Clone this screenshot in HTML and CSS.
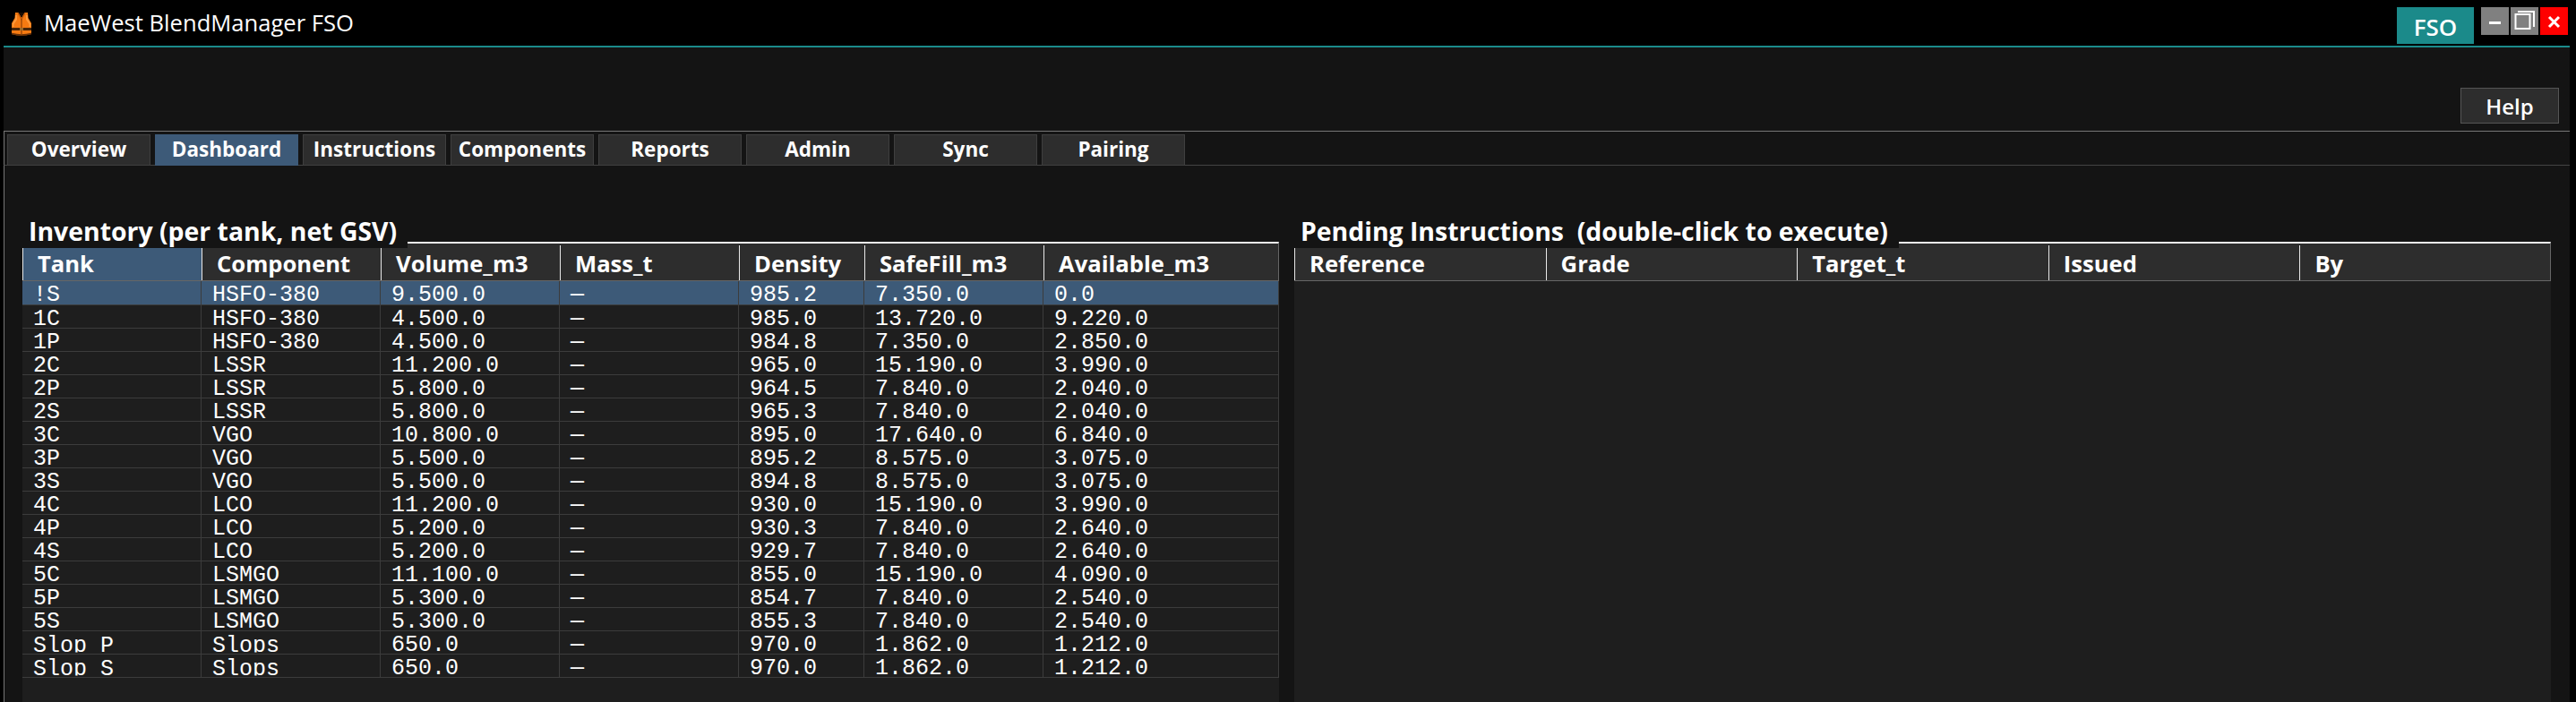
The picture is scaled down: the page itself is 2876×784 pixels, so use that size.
FILE: index.html
```html
<!DOCTYPE html>
<html lang="en">
<head>
    <meta charset="UTF-8">
    <title>MaeWest BlendManager FSO</title>
    <link rel="stylesheet" href="styles.css">
</head>
<body>
    <div class="window">
        <header class="titlebar">
            <svg class="app-icon" width="24" height="27" viewBox="0 0 24 27">
                <path d="M5 0 L8.5 0 L12 6 L15.5 0 L19 0 L19.5 6 L23 12 L23 24 Q12 27 1 24 L1 12 L4.5 6 Z" fill="#f57a12"/>
                <path d="M8.5 0 L15.5 0 L12 5.5 Z" fill="#1a0d04"/>
                <path d="M8 0.5 L12 7.5 L16 0.5" fill="none" stroke="#c25a0a" stroke-width="1.5"/>
                <path d="M5 3 L7 3 L7 8 L3.5 13 L3.5 16 L2 16 L2 12 L5 7 Z M19 3 L17 3 L17 8 L20.5 13 L20.5 16 L22 16 L22 12 L19 7 Z" fill="#ff9a3c"/>
                <path d="M11.4 7 H12.6 V24 H11.4 Z" fill="#8a3e08"/>
                <path d="M1 17 H23 V20 H1 Z" fill="#4a2608"/>
                <path d="M10 17 H14 V20 H10 Z" fill="#9a6a2a"/>
                <path d="M1 23.5 Q12 26.5 23 23.5" fill="none" stroke="#6a3208" stroke-width="1.5"/>
            </svg>
            <span class="app-title">MaeWest BlendManager FSO</span>
            <span class="mode-badge">FSO</span>
            <div class="win-buttons">
                <button class="win-btn">
                    <svg width="31" height="31" viewBox="0 0 31 31"><path d="M9 17.5 H22" stroke="#fff" stroke-width="3"/></svg>
                </button>
                <button class="win-btn">
                    <svg width="31" height="31" viewBox="0 0 31 31"><path d="M8 5 H26 V22" fill="none" stroke="#fff" stroke-width="2"/><rect x="5.5" y="8" width="16" height="16" fill="#808080" stroke="#fff" stroke-width="2"/></svg>
                </button>
                <button class="win-btn win-close">
                    <svg width="31" height="31" viewBox="0 0 31 31"><path d="M10 11 L21 22 M21 11 L10 22" stroke="#fff" stroke-width="3"/></svg>
                </button>
            </div>
        </header>

        <div class="toolbar">
            <button class="help-btn">Help</button>
        </div>

        <nav class="tabs">
            <a class="tab">Overview</a>
            <a class="tab active">Dashboard</a>
            <a class="tab">Instructions</a>
            <a class="tab">Components</a>
            <a class="tab">Reports</a>
            <a class="tab">Admin</a>
            <a class="tab">Sync</a>
            <a class="tab">Pairing</a>
        </nav>

        <main class="panels">
            <section class="group">
                <h2 class="group-title">Inventory (per tank, net GSV)</h2>
                <table class="grid grid-inventory">
                    <thead>
                        <tr>
                            <th class="sorted">Tank</th><th>Component</th><th>Volume_m3</th><th>Mass_t</th><th>Density</th><th>SafeFill_m3</th><th>Available_m3</th>
                        </tr>
                    </thead>
                    <tbody>
                        <tr class="selected"><td>!S</td><td>HSFO-380</td><td>9.500.0</td><td>—</td><td>985.2</td><td>7.350.0</td><td>0.0</td></tr>
                        <tr><td>1C</td><td>HSFO-380</td><td>4.500.0</td><td>—</td><td>985.0</td><td>13.720.0</td><td>9.220.0</td></tr>
                        <tr><td>1P</td><td>HSFO-380</td><td>4.500.0</td><td>—</td><td>984.8</td><td>7.350.0</td><td>2.850.0</td></tr>
                        <tr><td>2C</td><td>LSSR</td><td>11.200.0</td><td>—</td><td>965.0</td><td>15.190.0</td><td>3.990.0</td></tr>
                        <tr><td>2P</td><td>LSSR</td><td>5.800.0</td><td>—</td><td>964.5</td><td>7.840.0</td><td>2.040.0</td></tr>
                        <tr><td>2S</td><td>LSSR</td><td>5.800.0</td><td>—</td><td>965.3</td><td>7.840.0</td><td>2.040.0</td></tr>
                        <tr><td>3C</td><td>VGO</td><td>10.800.0</td><td>—</td><td>895.0</td><td>17.640.0</td><td>6.840.0</td></tr>
                        <tr><td>3P</td><td>VGO</td><td>5.500.0</td><td>—</td><td>895.2</td><td>8.575.0</td><td>3.075.0</td></tr>
                        <tr><td>3S</td><td>VGO</td><td>5.500.0</td><td>—</td><td>894.8</td><td>8.575.0</td><td>3.075.0</td></tr>
                        <tr><td>4C</td><td>LCO</td><td>11.200.0</td><td>—</td><td>930.0</td><td>15.190.0</td><td>3.990.0</td></tr>
                        <tr><td>4P</td><td>LCO</td><td>5.200.0</td><td>—</td><td>930.3</td><td>7.840.0</td><td>2.640.0</td></tr>
                        <tr><td>4S</td><td>LCO</td><td>5.200.0</td><td>—</td><td>929.7</td><td>7.840.0</td><td>2.640.0</td></tr>
                        <tr><td>5C</td><td>LSMGO</td><td>11.100.0</td><td>—</td><td>855.0</td><td>15.190.0</td><td>4.090.0</td></tr>
                        <tr><td>5P</td><td>LSMGO</td><td>5.300.0</td><td>—</td><td>854.7</td><td>7.840.0</td><td>2.540.0</td></tr>
                        <tr><td>5S</td><td>LSMGO</td><td>5.300.0</td><td>—</td><td>855.3</td><td>7.840.0</td><td>2.540.0</td></tr>
                        <tr><td><span class="cut">Slop P</span></td><td><span class="cut">Slops</span></td><td>650.0</td><td>—</td><td>970.0</td><td>1.862.0</td><td>1.212.0</td></tr>
                        <tr><td><span class="cut">Slop S</span></td><td><span class="cut">Slops</span></td><td>650.0</td><td>—</td><td>970.0</td><td>1.862.0</td><td>1.212.0</td></tr>
                    </tbody>
                </table>
            </section>

            <section class="group">
                <h2 class="group-title">Pending Instructions&nbsp; (double-click to execute)</h2>
                <table class="grid grid-pending">
                    <thead>
                        <tr>
                            <th>Reference</th><th>Grade</th><th>Target_t</th><th>Issued</th><th>By</th>
                        </tr>
                    </thead>
                </table>
            </section>
        </main>
    </div>
</body>
</html>
```

FILE: styles.css
```css
html, body {
    margin: 0;
    padding: 0;
    height: 100%;
    background-color: #000;
    overflow: hidden;
}
body {
    font-family: "Open Sans", "Noto Sans", sans-serif;
    color: #fff;
}
.window {
    height: 784px;
    margin: 0 7px 0 4px;
    display: flex;
    flex-direction: column;
    background-color: #141414;
    overflow: hidden;
}

/* Title bar */
.titlebar {
    height: 51px;
    flex: none;
    display: flex;
    align-items: flex-start;
    background-color: #000;
    border-bottom: 2px solid #1b8a8a;
}
.app-icon {
    margin: 14px 0 0 8px;
}
.app-title {
    margin: 7px 0 0 13px;
    font-size: 25.6px;
    line-height: 38px;
}
.mode-badge {
    width: 86px;
    height: 41px;
    margin: 8px 8px 0 auto;
    background-color: #1b8a8a;
    font-size: 26px;
    font-weight: 600;
    line-height: 44px;
    text-align: center;
}
.win-buttons {
    display: flex;
    gap: 2px;
    margin: 8px 2px 0 0;
}
.win-btn {
    width: 31px;
    height: 31px;
    padding: 0;
    border: 0;
    background-color: #808080;
}
.win-btn svg {
    display: block;
}
.win-close {
    background-color: #f00;
}

/* Help row */
.toolbar {
    height: 93px;
    flex: none;
    box-sizing: border-box;
    display: flex;
    justify-content: flex-end;
    align-items: flex-start;
    padding: 45px 12px 0 0;
}
.help-btn {
    width: 110px;
    height: 40px;
    padding: 0;
    background-color: #2d2d2d;
    border: 1px solid #555;
    color: #fff;
    font-family: inherit;
    font-size: 24px;
    font-weight: 600;
}

/* Tabs */
.tabs {
    height: 39px;
    flex: none;
    box-sizing: border-box;
    display: flex;
    gap: 5px;
    padding: 3px 0 0 3px;
    border-top: 1px solid #777;
    border-left: 1px solid #777;
    border-bottom: 1px solid #444;
}
.tab {
    width: 160px;
    height: 35px;
    box-sizing: border-box;
    background-color: #2d2d2d;
    border: 1px solid #3f3f3f;
    font-size: 22.5px;
    font-weight: 700;
    line-height: 32px;
    text-align: center;
}
.tab.active {
    background-color: #3d5a78;
    border-color: #3d5a78;
}

/* Panels */
.panels {
    flex: 1;
    display: flex;
    gap: 17px;
    padding: 85px 20px 0 20px;
    border-left: 1px solid #777;
    min-height: 0;
}
.group {
    position: relative;
    width: 1403px;
    flex: none;
    background-color: #1e1e1e;
}
.group-title {
    position: absolute;
    top: -31px;
    left: 0;
    z-index: 2;
    margin: 0;
    padding: 0 12px 0 7px;
    background-color: #141414;
    font-size: 28.4px;
    font-weight: 700;
    line-height: 38px;
    white-space: nowrap;
}

/* Tables */
.grid {
    width: 100%;
    table-layout: fixed;
    border-collapse: separate;
    border-spacing: 0;
}
.grid th {
    position: relative;
    height: 44px;
    box-sizing: border-box;
    padding: 3px 0 0 17px;
    background-color: #2d2d2d;
    border-top: 2px solid #f0f0f0;
    border-bottom: 1px solid #666;
    font-size: 25.6px;
    font-weight: 700;
    text-align: left;
}
.grid th::before {
    content: "";
    position: absolute;
    left: 0;
    top: 2px;
    bottom: 0;
    width: 1px;
    background-color: #e8e8e8;
}
.grid th.sorted {
    background-color: #3d5a78;
}
.grid th:last-child {
    border-right: 1px solid #666;
}
.grid td {
    height: 26px;
    box-sizing: border-box;
    padding: 5px 0 0 12px;
    border-right: 1px solid #3c3c3c;
    border-bottom: 1px solid #3c3c3c;
    font-family: "Liberation Mono", monospace;
    font-size: 25px;
    line-height: 19px;
    white-space: nowrap;
}
/* descenders are cut off in the app, only the bottom edge is clipped */
.grid td .cut {
    display: block;
    height: 17px;
    clip-path: inset(-8px 0 0 0);
}
.grid tr.selected td {
    height: 27px;
    background-color: #3d5a78;
}
.grid-inventory th:nth-child(1), .grid-inventory th:nth-child(2), .grid-inventory th:nth-child(3), .grid-inventory th:nth-child(4), .grid-inventory th:nth-child(6) {
    width: 200px;
}
.grid-inventory th:nth-child(5) {
    width: 140px;
}
.grid-inventory th:nth-child(7) {
    width: 263px;
}
```
